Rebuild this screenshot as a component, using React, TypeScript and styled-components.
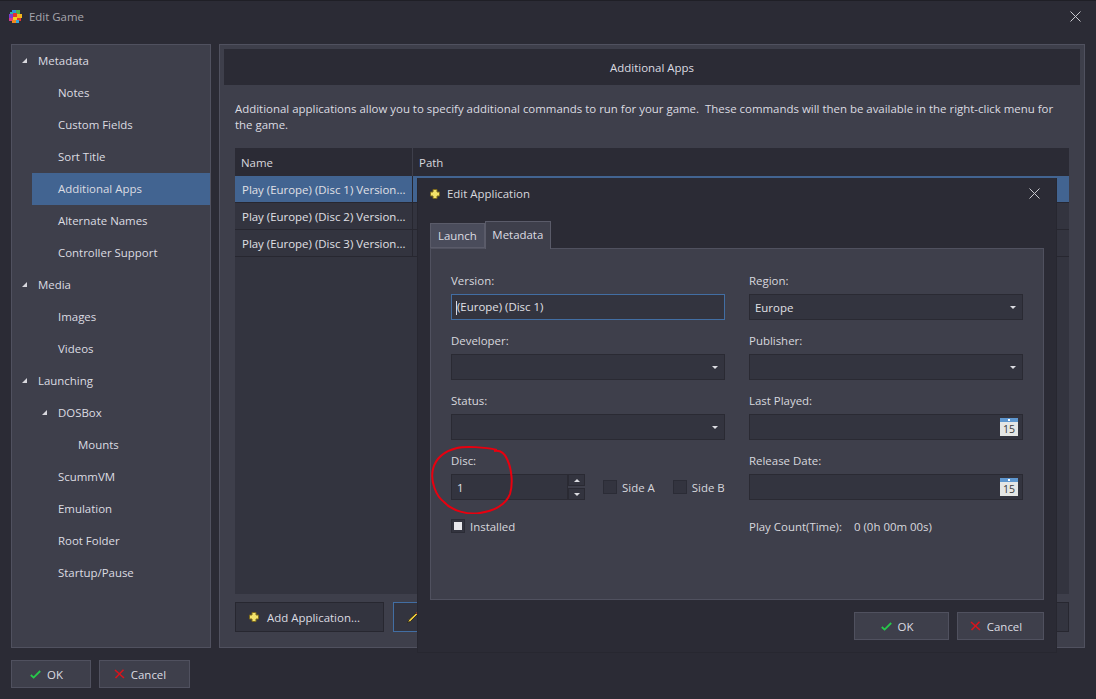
import React from 'react';
import styled, { createGlobalStyle } from 'styled-components';

const GlobalStyle = createGlobalStyle`
  html, body { margin: 0; padding: 0; background: #2b2b35; }
  body { font-family: "Open Sans", "Noto Sans", "Liberation Sans", sans-serif; font-size: 11.45px; color: #d8d8de; }
  * { box-sizing: border-box; }
`;

const Window = styled.div`
  position: relative;
  width: 1096px;
  height: 699px;
  overflow: hidden;
  background: #2b2b35;
  border-top: 1px solid #1f1f26;
  display: flex;
  flex-direction: column;
`;

const TitleBar = styled.div`
  height: 33px;
  flex: none;
  display: flex;
  align-items: center;
  gap: 7px;
  padding: 0 15px 2px 9px;
  color: #a5a5ac;
`;

const TitleText = styled.span`
  flex: 1;
`;

const Main = styled.div`
  flex: none;
  height: 604px;
  margin: 10px 11px 0;
  display: flex;
  gap: 8px;
`;

const Sidebar = styled.nav`
  width: 200px;
  flex: none;
  background: #3e3f4b;
  border: 1px solid #50515f;
  padding-bottom: 1px;
`;

const TreeRow = styled.div<{ $level: number; $selected?: boolean }>`
  position: relative;
  height: 32px;
  display: flex;
  align-items: center;
  margin-left: ${p => 20 * p.$level}px;
  padding: 0 0 1px 26px;
  background: ${p => (p.$selected ? '#426491' : 'transparent')};
  color: #dcdce2;
`;

const Arrow = styled.i`
  position: absolute;
  left: 10px;
  top: 13px;
  width: 0;
  height: 0;
  border-style: solid;
  border-width: 0 0 5px 5px;
  border-color: transparent transparent #d8d8de transparent;
`;

const Content = styled.section`
  flex: 1;
  background: #3e3f4b;
  border: 1px solid #50515f;
  padding: 4px;
  display: flex;
  flex-direction: column;
`;

const Header = styled.div`
  height: 36px;
  flex: none;
  background: #2b2b35;
  display: flex;
  align-items: center;
  justify-content: center;
  color: #dcdce2;
`;

const Body = styled.div`
  flex: 1;
  padding: 16px 11px 11px;
  display: flex;
  flex-direction: column;
  min-height: 0;
`;

const Description = styled.p`
  margin: 0 0 15px;
  line-height: 16px;
  white-space: pre-wrap;
  color: #dcdce2;
`;

const Table = styled.div`
  flex: 1;
  background: #33343f;
  min-height: 0;
`;

const HeadRow = styled.div`
  height: 28px;
  display: flex;
  background: #2b2b35;
`;

const HeadCell = styled.div<{ $width?: number }>`
  width: ${p => (p.$width ? `${p.$width}px` : 'auto')};
  flex: ${p => (p.$width ? 'none' : 1)};
  display: flex;
  align-items: center;
  padding-left: 6px;
  border-right: ${p => (p.$width ? '1px solid #3e3f4b' : 'none')};
`;

const Row = styled.div<{ $selected?: boolean }>`
  height: 27px;
  display: flex;
  background: ${p => (p.$selected ? '#426491' : '#33343f')};
  border-bottom: 1px solid #272730;
`;

const Cell = styled.div`
  width: 178px;
  flex: none;
  display: flex;
  align-items: center;
  padding-left: 7px;
  border-right: 1px solid #272730;
  white-space: nowrap;
  color: #e0e0e6;
`;

const ActionBar = styled.div`
  flex: none;
  margin-top: 8px;
  display: flex;
  justify-content: space-between;
  height: 30px;
`;

const ActionGroup = styled.div`
  display: flex;
  gap: 9px;
`;

const DarkButton = styled.div<{ $width: number; $focused?: boolean }>`
  width: ${p => p.$width}px;
  display: flex;
  align-items: center;
  gap: 8px;
  padding-left: 13px;
  background: #33343f;
  border: 1px solid ${p => (p.$focused ? '#426ea3' : '#272730')};
  color: #dcdce2;
`;

const Footer = styled.div`
  margin: 12px 11px 0;
  display: flex;
  gap: 8px;
`;

const LightButton = styled.div<{ $width: number }>`
  width: ${p => p.$width}px;
  height: 28px;
  display: flex;
  align-items: center;
  justify-content: center;
  gap: 6px;
  padding-right: 9px;
  background: #3e3f4b;
  border: 1px solid #50515f;
  color: #dcdce2;
`;

const Dialog = styled.div`
  position: absolute;
  left: 417px;
  top: 177px;
  width: 640px;
  height: 475px;
  background: #2b2b35;
  border: 1px solid #272730;
  border-top: none;
  padding: 0 12px;
  display: flex;
  flex-direction: column;
`;

const DialogTitle = styled.div`
  height: 31px;
  flex: none;
  display: flex;
  align-items: center;
  gap: 7px;
  padding-right: 4px;
  color: #d8d8de;
`;

const DialogTitleText = styled.span`
  flex: 1;
`;

const Tabs = styled.div`
  height: 28px;
  margin-top: 11px;
  flex: none;
  display: flex;
  align-items: flex-end;
`;

const Tab = styled.div<{ $active?: boolean }>`
  height: ${p => (p.$active ? 28 : 25)}px;
  padding: ${p => (p.$active ? '0 6.5px 3px' : '0 7px')};
  margin-bottom: ${p => (p.$active ? -1 : 0)}px;
  display: flex;
  align-items: center;
  background: ${p => (p.$active ? '#3e3f4b' : '#4a4c5b')};
  border: 1px solid #5a5b69;
  border-bottom: ${p => (p.$active ? 'none' : '1px solid #5a5b69')};
  z-index: ${p => (p.$active ? 1 : 0)};
  color: #dcdce2;
`;

const TabPanel = styled.div`
  width: 614px;
  height: 352px;
  flex: none;
  background: #3e3f4b;
  border: 1px solid #50515f;
  padding: 24px 20px 0;
  display: grid;
  grid-template-columns: 274px 274px;
  column-gap: 24px;
  grid-auto-rows: 60px;
  align-content: start;
`;

const Field = styled.div`
  display: flex;
  flex-direction: column;
`;

const Label = styled.div`
  height: 14px;
  margin-bottom: 7px;
  display: flex;
  align-items: center;
  color: #d8d8de;
`;

const Input = styled.div<{ $focused?: boolean }>`
  height: 26px;
  display: flex;
  align-items: center;
  justify-content: space-between;
  padding: 0 5px;
  background: #33343f;
  border: 1px solid ${p => (p.$focused ? '#426ea3' : '#2a2a33')};
  color: #e0e0e6;
`;

const DateInput = styled(Input)`
  justify-content: flex-end;
  padding-right: 4px;
`;

const TextCursor = styled.i`
  display: inline-block;
  width: 1px;
  height: 14px;
  margin: 0 0 0 -1px;
  vertical-align: middle;
  background: #dcdce2;
`;

const Caret = styled.i`
  width: 0;
  height: 0;
  margin-right: 1px;
  border-style: solid;
  border-width: 3px 3px 0;
  border-color: #dcdce2 transparent transparent;
`;

const DiscRow = styled.div`
  display: flex;
  align-items: center;
`;

const NumberInput = styled(Input)`
  width: 117px;
  flex: none;
`;

const Spinner = styled.div`
  width: 17px;
  height: 26px;
  flex: none;
  display: flex;
  flex-direction: column;
  justify-content: space-between;
  margin-right: 18px;
`;

const SpinButton = styled.div`
  height: 12px;
  display: flex;
  align-items: center;
  justify-content: center;
  background: #33343f;
  border: 1px solid #2a2a33;
`;

const SpinUp = styled.i`
  border-style: solid;
  border-width: 0 3px 3px;
  border-color: transparent transparent #dcdce2;
`;

const SpinDown = styled(Caret)`
  margin: 0;
`;

const CheckLabel = styled.label<{ $gap?: number }>`
  display: flex;
  align-items: center;
  gap: 5px;
  margin-right: ${p => p.$gap ?? 0}px;
  white-space: nowrap;
  color: #d8d8de;
`;

const Box = styled.span`
  width: 14px;
  height: 14px;
  flex: none;
  display: flex;
  align-items: center;
  justify-content: center;
  background: #33343f;
  border: 1px solid #2b2c36;
`;

const BoxFill = styled.span`
  width: 8px;
  height: 8px;
  background: #e8e8ec;
`;

const InfoRow = styled.div`
  display: flex;
  gap: 12px;
  height: 24px;
  margin-top: 1px;
  align-items: center;
  white-space: nowrap;
  color: #d8d8de;
`;

const DialogButtons = styled.div`
  width: 614px;
  margin-top: 12px;
  display: flex;
  justify-content: flex-end;
  gap: 8px;
`;

const Scribble = styled.svg`
  position: absolute;
  left: 425px;
  top: 443px;
  pointer-events: none;
`;

const Logo = () => (
  <svg width="13" height="13" viewBox="0 0 13 13">
    <rect x="3" y="0" width="4" height="3" fill="#2f8fe0" />
    <rect x="7" y="0" width="4" height="4" fill="#4fb548" />
    <rect x="1" y="2" width="3" height="3" fill="#2fb6a6" />
    <rect x="0" y="4" width="4" height="4" fill="#7a3fd0" />
    <rect x="4" y="3" width="4" height="4" fill="#e0362f" />
    <rect x="8" y="4" width="5" height="4" fill="#f2b51c" />
    <rect x="0" y="8" width="4" height="3" fill="#d83a8c" />
    <rect x="4" y="7" width="4" height="4" fill="#f4d41e" />
    <rect x="8" y="8" width="4" height="3" fill="#e0362f" />
    <rect x="3" y="10" width="4" height="3" fill="#f08a1d" />
    <rect x="7" y="10" width="3" height="3" fill="#35a6d8" />
  </svg>
);

const PlusIcon = () => (
  <svg width="10" height="10" viewBox="0 0 10 10">
    <path d="M3 .5h4v2.5h2.5v4H7v2.5H3V7H.5V3H3z" fill="#f4e36a" stroke="#7d6a1c" strokeWidth="1" />
  </svg>
);

const PencilIcon = () => (
  <svg width="12" height="11" viewBox="0 0 12 11">
    <path d="M.5 10.5L2 7.5 9 1l1.5 1.5L3.5 9.5z" fill="#e8c53a" stroke="#1c1c1c" strokeWidth=".8" />
    <path d="M9 1l1-1 1.5 1.5-1 1z" fill="#d8322c" />
  </svg>
);

const CheckIcon = () => (
  <svg width="11" height="9" viewBox="0 0 11 9">
    <path d="M.8 5L3.6 7.6 10.2 1" fill="none" stroke="#27c94a" strokeWidth="1.8" />
  </svg>
);

const CrossIcon = () => (
  <svg width="11" height="10" viewBox="0 0 11 10">
    <path d="M1 1l9 8M9.5 .8L1.5 9" fill="none" stroke="#d8141c" strokeWidth="1.6" />
  </svg>
);

const CloseIcon = () => (
  <svg width="11" height="11" viewBox="0 0 11 11">
    <path d="M.5 .5l10 10M10.5 .5l-10 10" fill="none" stroke="#c8c8ce" strokeWidth="1" />
  </svg>
);

const CalendarIcon = () => (
  <svg width="18" height="18" viewBox="0 0 18 18">
    <rect width="18" height="18" fill="#e4e6e6" />
    <rect width="18" height="4" fill="#5f97cf" />
    <rect x="8" y="1" width="2" height="2" fill="#fff" />
    <text x="9" y="15" textAnchor="middle" fontSize="10.5" fill="#3a3a3a" fontFamily="Open Sans, sans-serif">15</text>
  </svg>
);

const tree: { label: string; level: number; open?: boolean; selected?: boolean }[] = [
  { label: 'Metadata', level: 0, open: true },
  { label: 'Notes', level: 1 },
  { label: 'Custom Fields', level: 1 },
  { label: 'Sort Title', level: 1 },
  { label: 'Additional Apps', level: 1, selected: true },
  { label: 'Alternate Names', level: 1 },
  { label: 'Controller Support', level: 1 },
  { label: 'Media', level: 0, open: true },
  { label: 'Images', level: 1 },
  { label: 'Videos', level: 1 },
  { label: 'Launching', level: 0, open: true },
  { label: 'DOSBox', level: 1, open: true },
  { label: 'Mounts', level: 2 },
  { label: 'ScummVM', level: 1 },
  { label: 'Emulation', level: 1 },
  { label: 'Root Folder', level: 1 },
  { label: 'Startup/Pause', level: 1 },
];

const apps = [
  'Play (Europe) (Disc 1) Version...',
  'Play (Europe) (Disc 2) Version...',
  'Play (Europe) (Disc 3) Version...',
];

const App: React.FC = () => {
  return (
    <Window>
      <GlobalStyle />
      <TitleBar>
        <Logo />
        <TitleText>Edit Game</TitleText>
        <CloseIcon />
      </TitleBar>

      <Main>
        <Sidebar>
          {tree.map(item => (
            <TreeRow key={item.label} $level={item.level} $selected={item.selected}>
              {item.open && <Arrow />}
              {item.label}
            </TreeRow>
          ))}
        </Sidebar>

        <Content>
          <Header>Additional Apps</Header>
          <Body>
            <Description>
              {'Additional applications allow you to specify additional commands to run for your game.  These commands will then be available in the right-click menu for the game.'}
            </Description>
            <Table>
              <HeadRow>
                <HeadCell $width={178}>Name</HeadCell>
                <HeadCell>Path</HeadCell>
              </HeadRow>
              {apps.map((name, index) => (
                <Row key={name} $selected={index === 0}>
                  <Cell>{name}</Cell>
                </Row>
              ))}
            </Table>
            <ActionBar>
              <ActionGroup>
                <DarkButton $width={149} $focused={false}>
                  <PlusIcon />
                  <span>Add Application...</span>
                </DarkButton>
                <DarkButton $width={149} $focused>
                  <PencilIcon />
                </DarkButton>
              </ActionGroup>
              <DarkButton $width={149} />
            </ActionBar>
          </Body>
        </Content>
      </Main>

      <Footer>
        <LightButton $width={80}>
          <CheckIcon />
          OK
        </LightButton>
        <LightButton $width={91}>
          <CrossIcon />
          Cancel
        </LightButton>
      </Footer>

      <Dialog>
        <DialogTitle>
          <PlusIcon />
          <DialogTitleText>Edit Application</DialogTitleText>
          <CloseIcon />
        </DialogTitle>
        <Tabs>
          <Tab>Launch</Tab>
          <Tab $active>Metadata</Tab>
        </Tabs>
        <TabPanel>
          <Field>
            <Label>Version:</Label>
            <Input $focused><span><TextCursor />(Europe) (Disc 1)</span></Input>
          </Field>
          <Field>
            <Label>Region:</Label>
            <Input>Europe<Caret /></Input>
          </Field>
          <Field>
            <Label>Developer:</Label>
            <Input><span /><Caret /></Input>
          </Field>
          <Field>
            <Label>Publisher:</Label>
            <Input><span /><Caret /></Input>
          </Field>
          <Field>
            <Label>Status:</Label>
            <Input><span /><Caret /></Input>
          </Field>
          <Field>
            <Label>Last Played:</Label>
            <DateInput><CalendarIcon /></DateInput>
          </Field>
          <Field>
            <Label>Disc:</Label>
            <DiscRow>
              <NumberInput>1</NumberInput>
              <Spinner>
                <SpinButton><SpinUp /></SpinButton>
                <SpinButton><SpinDown /></SpinButton>
              </Spinner>
              <CheckLabel $gap={18}><Box />Side A</CheckLabel>
              <CheckLabel><Box />Side B</CheckLabel>
            </DiscRow>
          </Field>
          <Field>
            <Label>Release Date:</Label>
            <DateInput><CalendarIcon /></DateInput>
          </Field>
          <InfoRow>
            <CheckLabel><Box><BoxFill /></Box>Installed</CheckLabel>
          </InfoRow>
          <InfoRow>
            <span>Play Count(Time):</span>
            <span>0 (0h 00m 00s)</span>
          </InfoRow>
        </TabPanel>
        <DialogButtons>
          <LightButton $width={95}>
            <CheckIcon />
            OK
          </LightButton>
          <LightButton $width={87}>
            <CrossIcon />
            Cancel
          </LightButton>
        </DialogButtons>
      </Dialog>

      <Scribble width="90" height="70" viewBox="425 443 90 70">
        <path
          d="M497 449 C485 446 465 445 457 447 C445 450 436 456 433 468 C430 480 436 495 444 501 C452 510 468 514 480 512 C495 510 506 503 510 493 C513 483 512 468 507 458 C504 451 499 449 494 450"
          fill="none"
          stroke="#e8000f"
          strokeWidth="2"
        />
      </Scribble>
    </Window>
  );
};

export default App;
